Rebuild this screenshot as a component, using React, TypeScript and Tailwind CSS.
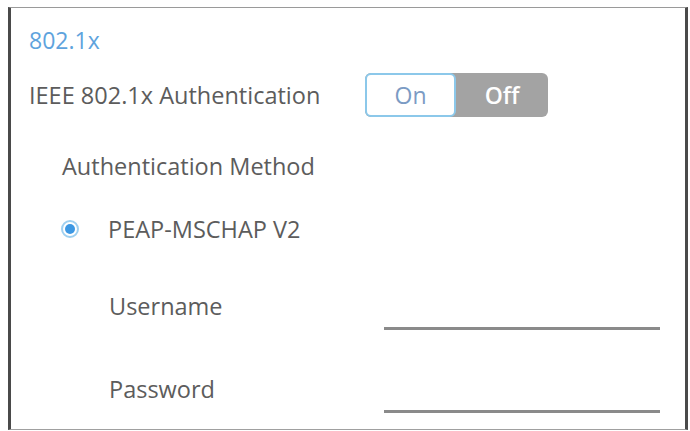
import React, { useState } from "react";

const font = { fontFamily: '"Open Sans", "Noto Sans", sans-serif' };

function Toggle() {
  const [on, setOn] = useState(true);
  const active =
    "flex w-[91px] items-center justify-center rounded-[6px] border-2 border-[#8cc8ea] bg-white text-[23px] font-medium text-[#7b9bc4]";
  const idle = "flex flex-1 items-center justify-center text-[23px] font-semibold text-white";
  return (
    <div className="flex h-[44px] w-[183px] rounded-[6px] bg-[#a3a3a3]">
      <button type="button" onClick={() => setOn(true)} className={on ? active : idle}>
        On
      </button>
      <button type="button" onClick={() => setOn(false)} className={!on ? active : idle}>
        Off
      </button>
    </div>
  );
}

function LineField({ label, type }: { label: string; type: string }) {
  return (
    <div className="flex items-start">
      <label className="w-[373px] pl-[98px] text-[23.5px] font-medium leading-[30px] text-[#5c5c5c]">
        {label}
      </label>
      <input
        type={type}
        className="mt-[36px] h-[3px] w-[276px] border-b-[3px] border-[#8a8a8a] bg-transparent outline-none"
      />
    </div>
  );
}

export default function App() {
  return (
    <div className="h-[431px] w-[690px] bg-white pl-[8px] pt-[7px]" style={font}>
      <div className="flex h-[423px] w-[680px] flex-col border-t border-b border-l-[3px] border-r-[3px] border-t-[#9a9a9a] border-b-[#a0a0a0] border-l-[#4a4a4a] border-r-[#4a4a4a]">
        <div className="pl-[18px] pt-[17px] text-[23px] leading-[30px] text-[#5ea3dd]">
          802.1x
        </div>
        <div className="mt-[18px] flex items-center pl-[18px]">
          <span className="w-[336px] text-[23.5px] font-medium leading-[30px] text-[#5c5c5c]">
            IEEE 802.1x Authentication
          </span>
          <Toggle />
        </div>
        <div className="mt-[34px] pl-[51px] text-[23.5px] font-medium leading-[30px] text-[#5c5c5c]">
          Authentication Method
        </div>
        <div className="mt-[33px] flex items-center pl-[50px]">
          <span className="flex h-[18px] w-[18px] items-center justify-center rounded-full border-2 border-[#9fd0f0]">
            <span className="h-[10px] w-[10px] rounded-full bg-[#3d98e3]" />
          </span>
          <span className="ml-[29px] text-[23.5px] font-medium leading-[30px] text-[#5c5c5c]">
            PEAP-MSCHAP V2
          </span>
        </div>
        <div className="mt-[47px]">
          <LineField label="Username" type="text" />
        </div>
        <div className="mt-[44px]">
          <LineField label="Password" type="password" />
        </div>
      </div>
    </div>
  );
}
